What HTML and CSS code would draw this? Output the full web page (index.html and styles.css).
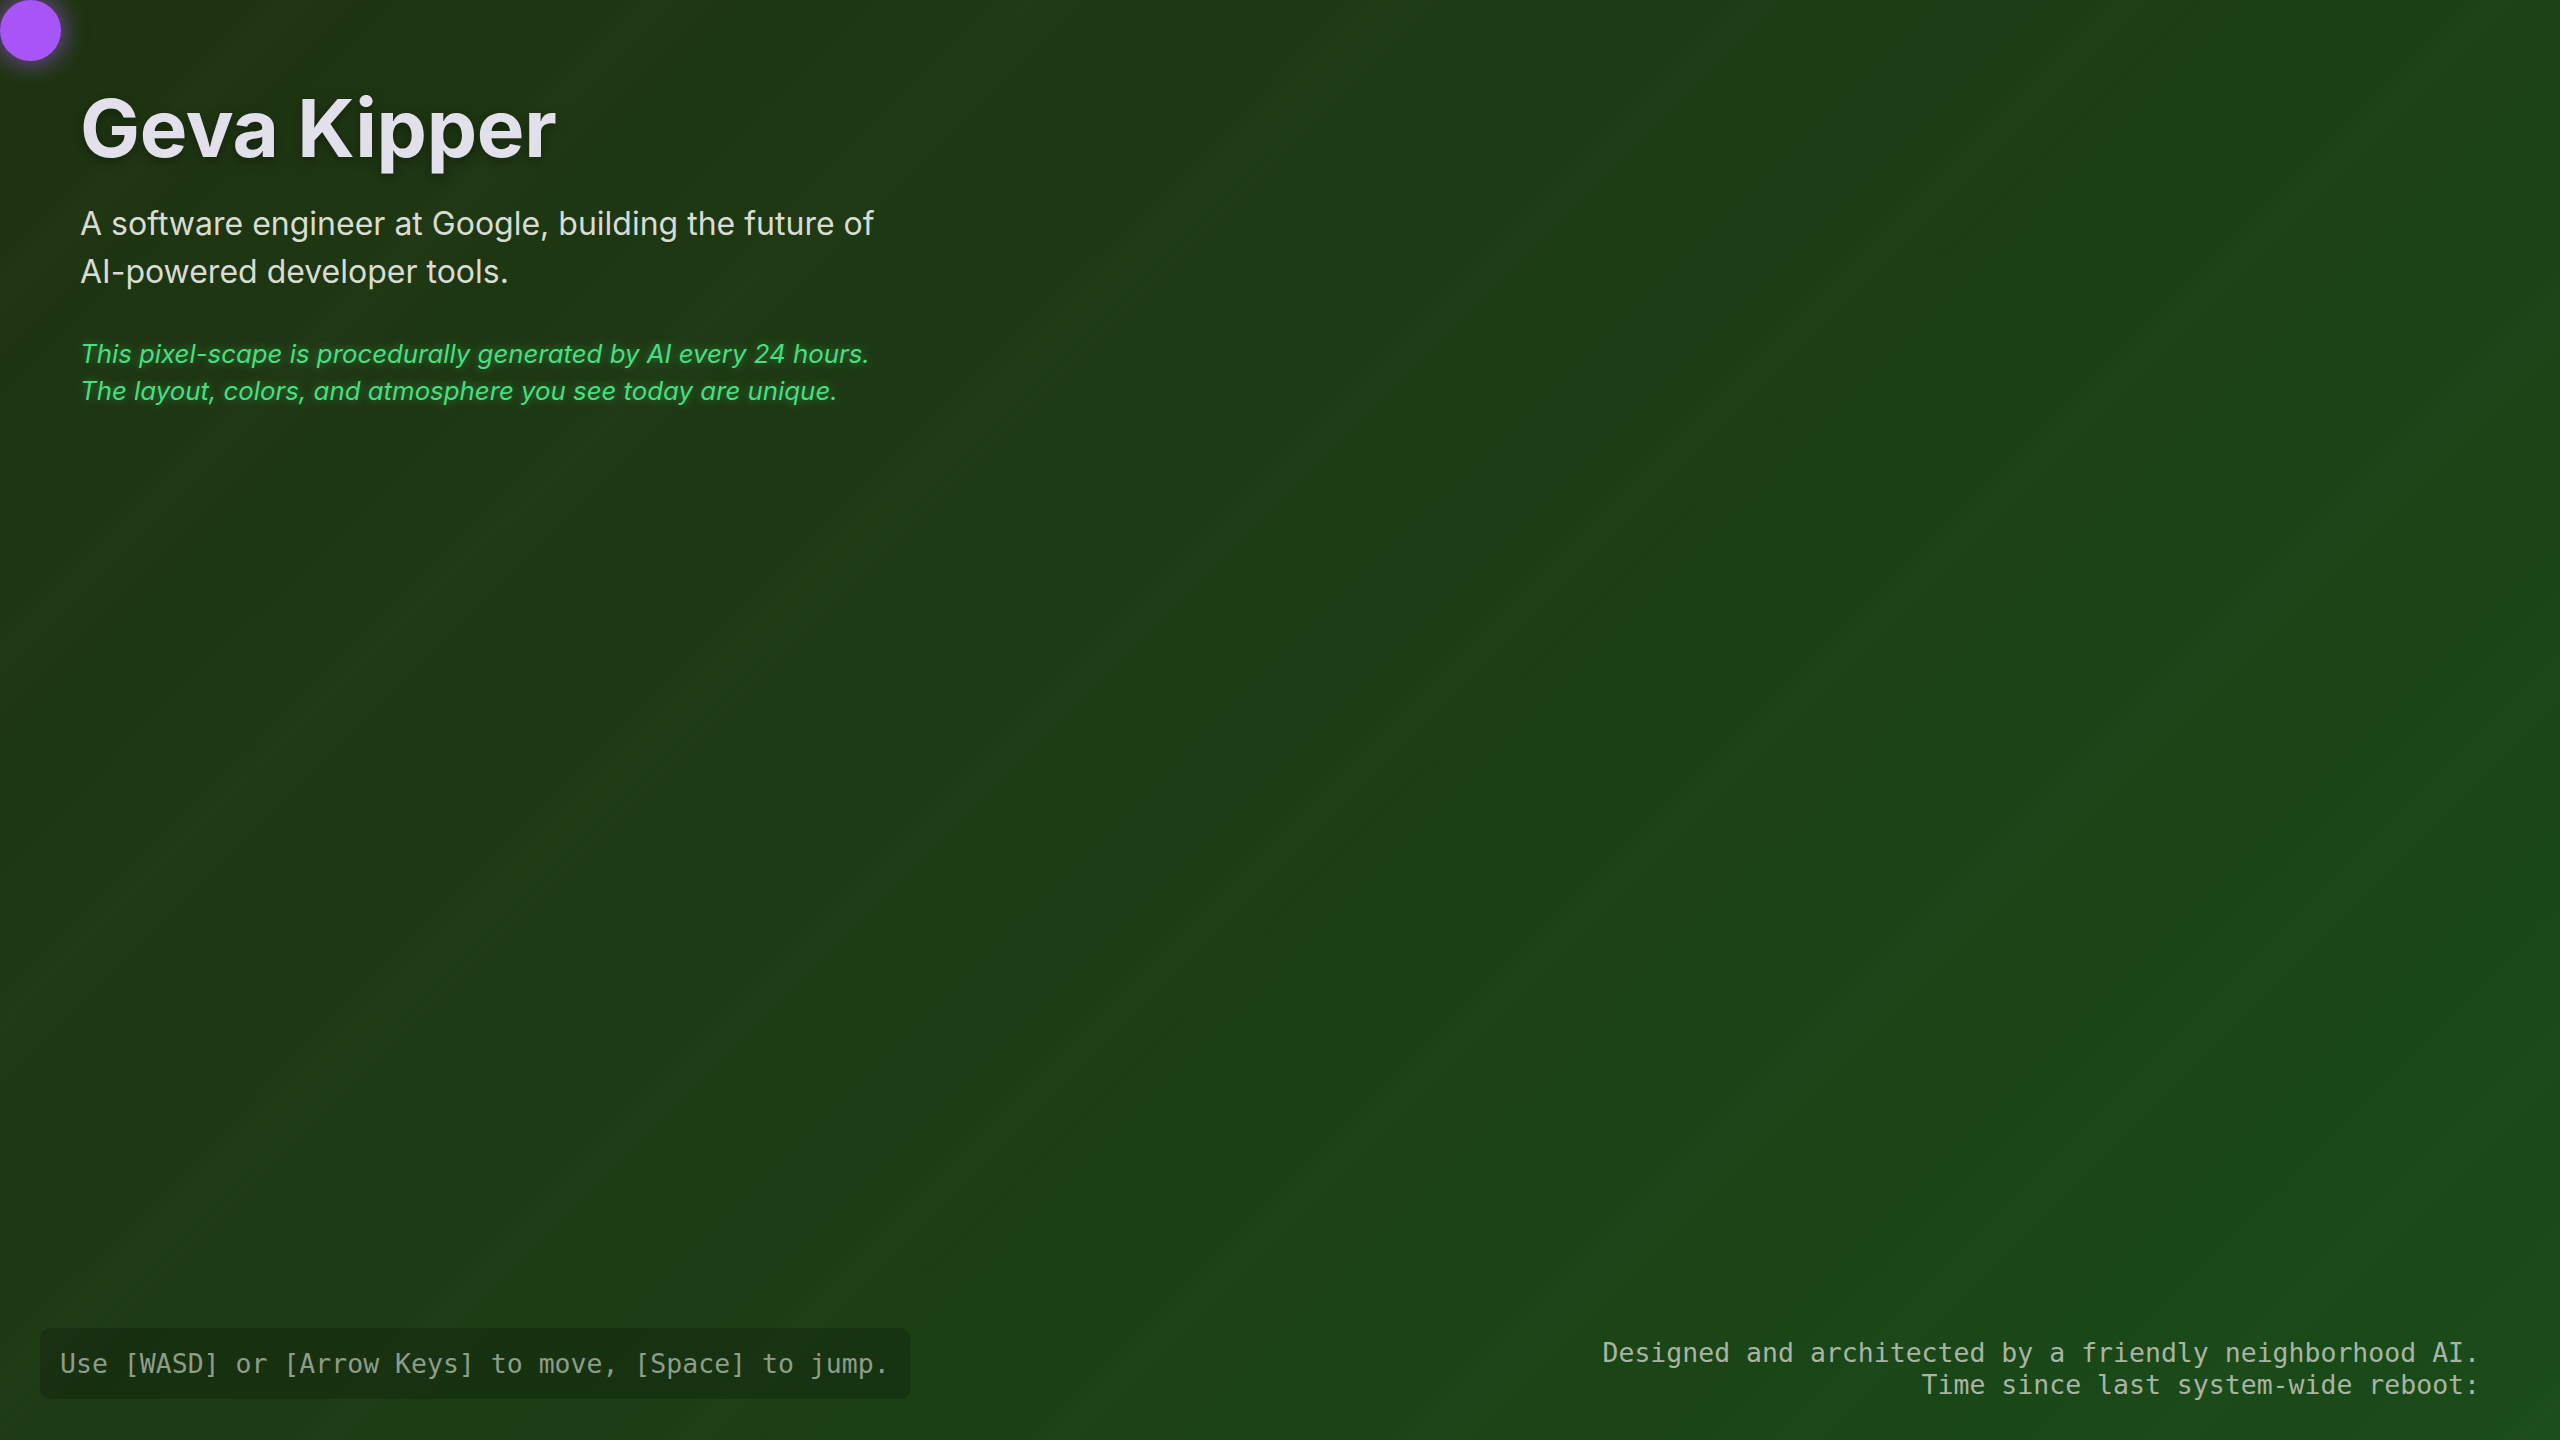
FILE: index.html
```html
<!DOCTYPE html>
<html lang="en">
<head>
<meta charset="utf-8">
<title>Geva Kipper</title>
<link rel="stylesheet" href="styles.css">
</head>
<body>
<div class="scene">
  <div class="player"></div>
  <header class="intro">
    <h1 class="name">Geva Kipper</h1>
    <p class="tagline">A software engineer at Google, building the future of AI-powered developer tools.</p>
    <p class="notice">This pixel-scape is procedurally generated by AI every 24 hours.<br>The layout, colors, and atmosphere you see today are unique.</p>
  </header>
  <footer class="bottom">
    <div class="controls">Use [WASD] or [Arrow Keys] to move, [Space] to jump.</div>
    <div class="credits">
      <div>Designed and architected by a friendly neighborhood AI.</div>
      <div>Time since last system-wide reboot:</div>
    </div>
  </footer>
</div>
</body>
</html>
```

FILE: styles.css
```css
html, body {
  margin: 0;
  padding: 0;
  height: 100%;
}

body {
  overflow: hidden;
  font-family: "Inter", "Noto Sans", sans-serif;
  background: linear-gradient(135deg, #1f3311 0%, #1c3d15 50%, #1a4c19 100%);
}

.scene {
  position: relative;
  height: 100vh;
  display: flex;
  flex-direction: column;
  justify-content: space-between;
  background-image: repeating-linear-gradient(135deg, rgba(255,255,255,0) 0px, rgba(255,255,255,0) 180px, rgba(255,255,255,0.010) 200px, rgba(255,255,255,0) 260px);
}

.player {
  position: absolute;
  left: 0;
  top: 0;
  width: 61px;
  height: 61px;
  border-radius: 50%;
  background: #a855f7;
  box-shadow: 0 0 22px 4px rgba(168, 85, 247, 0.55);
}

.intro {
  padding: 80px 0 0 80px;
}

.name {
  margin: 0;
  font-size: 80px;
  line-height: 96px;
  font-weight: 700;
  color: #e2e0ea;
  letter-spacing: -0.3px;
  text-shadow: 0 3px 12px rgba(0, 0, 0, 0.35);
}

.tagline {
  margin: 24px 0 0 0;
  max-width: 820px;
  font-size: 32px;
  line-height: 48px;
  color: #d8dcd2;
}

.notice {
  margin: 39px 0 0 0;
  font-size: 25.8px;
  line-height: 37px;
  font-style: italic;
  color: #4ade80;
  text-shadow: 0 0 10px rgba(74, 222, 128, 0.45);
}

.bottom {
  display: flex;
  justify-content: space-between;
  align-items: flex-end;
  padding: 0 80px 39px 40px;
}

.controls {
  margin-bottom: 2px;
  padding: 20px 20px;
  border-radius: 10px;
  background: rgba(0, 0, 0, 0.18);
  font-family: "DejaVu Sans Mono", "Liberation Mono", monospace;
  font-size: 26.5px;
  line-height: 31px;
  color: #8e9c8a;
}

.credits {
  text-align: right;
  font-family: "DejaVu Sans Mono", "Liberation Mono", monospace;
  font-size: 26.5px;
  line-height: 32px;
  color: #a9b4a5;
}
```
